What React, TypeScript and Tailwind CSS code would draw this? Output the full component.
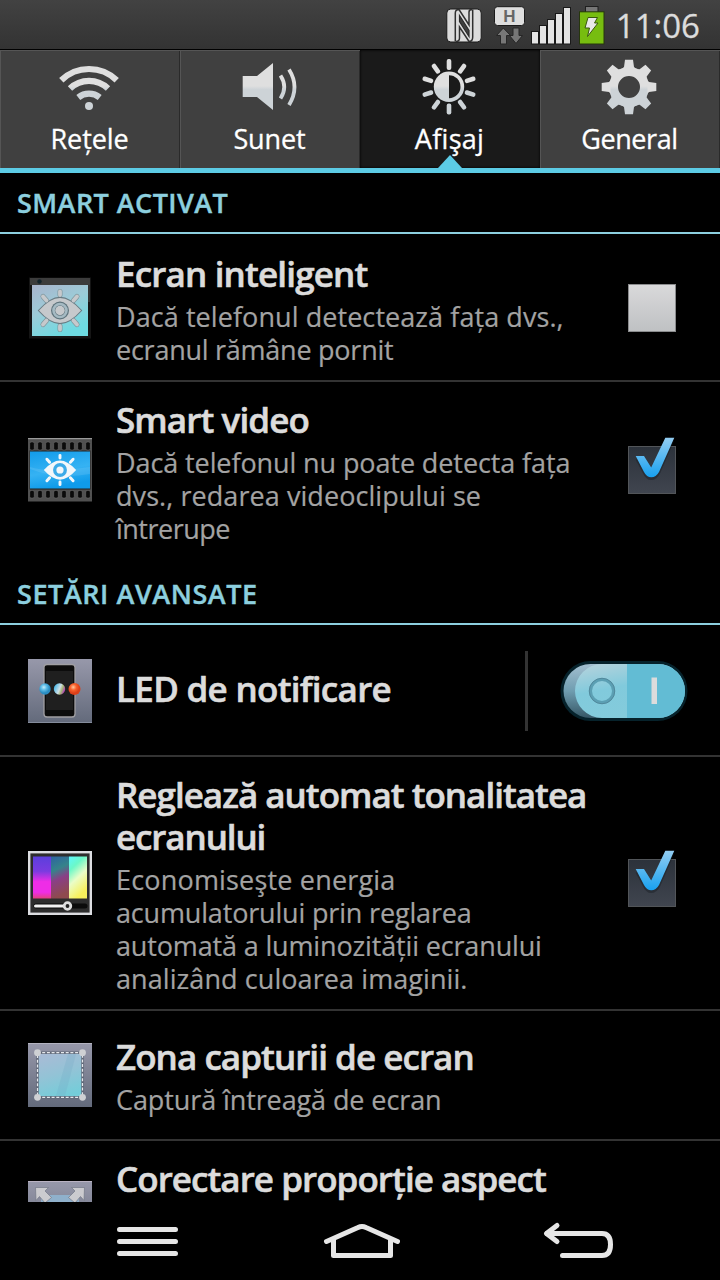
import type { ReactNode } from "react";
import { clsx } from "clsx";

type Line = { text: string; className?: string };

const tabs = [
  { label: "Rețele", icon: <WifiIcon />, track: "tracking-[-0.1px]" },
  { label: "Sunet", icon: <SoundIcon />, track: "tracking-[-0.1px]" },
  { label: "Afişaj", icon: <DisplayIcon />, track: "tracking-[0.3px]", active: true },
  { label: "General", icon: <GearIcon />, track: "tracking-[-0.4px]" },
];

const rays = [0, 36, 72, 108, 144, 180, 216, 252, 288, 324];
const teeth = [0, 45, 90, 135, 180, 225, 270, 315];
const holes = [0, 1, 2, 3, 4, 5, 6, 7];

function MetalFill({ id }: { id: string }) {
  return (
    <linearGradient id={id} x1="0" y1="0" x2="0" y2="72" gradientUnits="userSpaceOnUse">
      <stop offset="0.5" stopColor="#dfdfdf" />
      <stop offset="0.55" stopColor="#cdd3d7" />
    </linearGradient>
  );
}

function WifiIcon() {
  return (
    <svg className="h-[72px] w-[180px]" viewBox="0 0 180 72" fill="none" stroke="url(#wifi)" strokeWidth="6.2">
      <defs>
        <MetalFill id="wifi" />
      </defs>
      <path d="M61.3 30.3A39.6 39.6 0 0 1 116.7 30.3" />
      <path d="M70 38.5A27.3 27.3 0 0 1 108 38.5" />
      <path d="M78.3 47.5A17 17 0 0 1 99.7 47.5" />
      <circle cx="89" cy="56" r="4" fill="#cdd3d7" stroke="none" />
    </svg>
  );
}

function SoundIcon() {
  return (
    <svg className="h-[72px] w-[180px]" viewBox="180 0 180 72" fill="none">
      <defs>
        <MetalFill id="sound" />
      </defs>
      <path d="M242.7 26H257L273 13V60L257 47H242.7Z" fill="url(#sound)" />
      <path d="M280.5 25.5Q288 37 280.5 48.5M289 19.5Q300 37 289 55" stroke="url(#sound)" strokeWidth="3.8" />
    </svg>
  );
}

function DisplayIcon() {
  return (
    <svg className="h-[72px] w-[180px]" viewBox="360 0 180 72">
      <defs>
        <MetalFill id="display" />
      </defs>
      <circle cx="449" cy="36.7" r="15.2" fill="url(#display)" />
      <path d="M449 25.2A11.5 11.5 0 0 1 449 48.2Z" fill="#1a1a1a" />
      {rays.map((deg) => (
        <rect
          key={deg}
          x="446.7"
          y="9"
          width="4.6"
          height="11"
          rx="2"
          fill={deg > 90 && deg < 270 ? "#cdd3d7" : "#dfdfdf"}
          transform={`rotate(${deg} 449 36.7)`}
        />
      ))}
    </svg>
  );
}

function GearIcon() {
  return (
    <svg className="h-[72px] w-[180px]" viewBox="540 0 180 72">
      <defs>
        <MetalFill id="gear" />
      </defs>
      <circle cx="629" cy="37" r="15.5" fill="none" stroke="url(#gear)" strokeWidth="9" />
      {teeth.map((deg) => (
        <path
          key={deg}
          d="M-6.5 -18.5L-5 -20L-4 -27.3H4L5 -20L6.5 -18.5Z"
          fill={deg > 90 && deg < 270 ? "#cdd3d7" : "#dfdfdf"}
          transform={`translate(629 37) rotate(${deg})`}
        />
      ))}
    </svg>
  );
}

function StatusBar() {
  return (
    <header className="flex h-[50px] shrink-0 items-center justify-end border-b border-black bg-linear-to-b from-[#424242] to-[#333] pr-5">
      <svg className="h-[49px] w-[170px]" viewBox="440 0 170 49" fill="none">
        {/* NFC */}
        <rect x="446.8" y="9" width="34.4" height="33" rx="4" fill="#dcdcdc" stroke="#1b1b1b" />
        <path d="M455.3 41.500V13Q455.3 9.500 459 9.500L469 25V12Q469 9.500 472 9.500M472.700 9.500V37Q472.700 41.500 469 41.500L459.500 27V38Q459.500 41.500 456 41.500" stroke="#303030" strokeWidth="1.500" />
        <path d="M459.500 15.500L469 30.500V36.500L459.500 21.500Z" fill="#404040" stroke="#2b2b2b" strokeWidth="1.200" />
        {/* HSPA */}
        <rect x="494.5" y="6.7" width="30" height="18.8" rx="3" fill="#dedede" stroke="#1b1b1b" />
        <path d="M503.3 28L496.5 35.5H500.5V44H506.5V35.5H510.5Z" fill="#777" stroke="#262626" />
        <path d="M516 43.5L509.5 35.5H513V28H519V35.5H522.5Z" fill="#777" stroke="#262626" />
        {/* signal */}
        <g fill="#e4e4e4" stroke="#191919">
          <rect x="531.5" y="31.5" width="7" height="12.5" />
          <rect x="539.5" y="25.5" width="7" height="18.5" />
          <rect x="547.5" y="19.5" width="7" height="24.5" />
          <rect x="555.5" y="13.5" width="7" height="30.5" />
          <rect x="563.5" y="7.5" width="7" height="36.5" />
        </g>
        {/* battery */}
        <rect x="585.5" y="6.5" width="12.5" height="6" fill="#777" stroke="#1f1f1f" />
        <rect x="579.5" y="11.8" width="24.5" height="32.2" fill="#77bd10" stroke="#26360c" />
        <path d="M588 17.5H597.5L594.5 23H598L587.5 36.5L589.5 28H585Z" fill="#e8e8e8" stroke="#39590c" />
        <text x="509.5" y="22.3" textAnchor="middle" className="font-['Liberation_Sans',sans-serif] text-[17px] font-bold" fill="#666">
          H
        </text>
      </svg>
      <span className="ml-[3px] w-[87px] pt-0.5 text-right text-[33px] leading-[48px] whitespace-nowrap text-[#dcdcdc] [-webkit-text-stroke:0.3px]">
        11:06
      </span>
    </header>
  );
}

function TabBar() {
  return (
    <nav className="grid h-[123px] shrink-0 grid-cols-4 border-b-[5px] border-[#5ccbe5]">
      {tabs.map((tab) => (
        <div
          key={tab.label}
          className={clsx(
            "relative flex flex-col items-center",
            tab.active
              ? "bg-[#1a1a1a] shadow-[inset_0_0_3px_#000]"
              : "bg-[#404040] shadow-[inset_1px_1px_0_#555,inset_-1px_0_0_#2a2a2a]"
          )}
        >
          {tab.icon}
          <span className={clsx("pr-[1px] text-[27px] leading-[33px] text-white [-webkit-text-stroke:0.3px]", tab.track)}>
            {tab.label}
          </span>
          {tab.active && (
            <svg className="absolute bottom-0 left-[78px] h-[13px] w-6" viewBox="0 0 24 13">
              <path d="M0 13L12 0L24 13Z" fill="#5ccbe5" />
            </svg>
          )}
        </div>
      ))}
    </nav>
  );
}

function Eye({ fill, iris }: { fill: string; iris: string }) {
  return (
    <g>
      <path d="M-21 0Q-10 -12.5 0 -12.5T21 0Q10 12.5 0 12.5T-21 0Z" fill={fill} />
      <circle r="9" fill={iris} />
      <circle r="4.7" fill={fill} />
      <path
        d="M0 -19V-15.5M0 19V15.5M-17 -14L-13.5 -10M17 -14L13.5 -10M-17 14L-13.5 10M17 14L13.5 10"
        stroke={fill}
        strokeWidth="3.8"
        strokeLinecap="round"
      />
    </g>
  );
}

function SmartScreenIcon() {
  return (
    <svg className="size-16" viewBox="0 0 64 64">
      <defs>
        <linearGradient id="screen" x1="0" y1="0" x2="0.5" y2="1">
          <stop offset="0" stopColor="#a9b4cd" />
          <stop offset="0.5" stopColor="#9cccd8" />
          <stop offset="1" stopColor="#6edbe2" />
        </linearGradient>
      </defs>
      <rect x="1" y="1.5" width="62" height="61" fill="#151515" />
      <rect x="2" y="2" width="60" height="7" fill="#3c3c3c" />
      <rect x="60" y="9" width="2" height="17" fill="#333" />
      <circle cx="11.5" cy="5.5" r="2.2" fill="#13232b" />
      <rect x="4" y="9" width="56" height="51" fill="url(#screen)" />
      <g transform="translate(32 34.5)">
        <path
          d="M0 -19V-15.5M0 19V15.5M-17 -14L-13.5 -10M17 -14L13.5 -10M-17 14L-13.5 10M17 14L13.5 10"
          stroke="#7e959c"
          strokeWidth="5"
          strokeLinecap="round"
        />
        <path d="M-22.3 0Q-10 -13.7 0 -13.7T22.3 0Q10 13.7 0 13.7T-22.3 0Z" fill="#677a82" />
        <Eye fill="#c6c9cc" iris="#5f747d" />
        <circle r="6.5" fill="none" stroke="#a5bac3" strokeWidth="2.6" />
      </g>
    </svg>
  );
}

function SmartVideoIcon() {
  return (
    <svg className="size-16" viewBox="0 0 64 64">
      <defs>
        <linearGradient id="video" x1="0" y1="0" x2="0.3" y2="1">
          <stop offset="0" stopColor="#129bea" />
          <stop offset="0.6" stopColor="#35b2f3" />
          <stop offset="1" stopColor="#0f9bea" />
        </linearGradient>
      </defs>
      <rect width="64" height="63.5" fill="#505050" />
      <rect width="64" height="1.2" fill="#999" />
      <rect x="1.5" y="12.5" width="61" height="39" fill="#222" />
      {holes.map((i) => (
        <g key={i} fill="#0a0a0a" stroke="#6b6b6b" strokeWidth="0.6">
          <rect x={1.7 + i * 8} y="4" width="4.6" height="8" rx="1.5" />
          <rect x={1.7 + i * 8} y="52.5" width="4.6" height="7.5" rx="1.5" />
        </g>
      ))}
      <rect x="2" y="13.5" width="60" height="37" fill="url(#video)" />
      <path d="M2 29Q20 35 62 29V36Q30 42 2 31Z" fill="#7fcdf7" opacity="0.25" />
      <g transform="translate(32 32) scale(0.77)">
        <Eye fill="#f3f7fa" iris="#3dabe8" />
      </g>
    </svg>
  );
}

function LedIcon() {
  return (
    <svg className="mt-0.5 size-16" viewBox="0 0 64 64">
      <defs>
        <linearGradient id="panel" x1="0" y1="0" x2="0" y2="1">
          <stop offset="0" stopColor="#9798aa" />
          <stop offset="1" stopColor="#636a7b" />
        </linearGradient>
        <radialGradient id="blue" cx="0.4" cy="0.35">
          <stop offset="0" stopColor="#c4eefb" />
          <stop offset="0.5" stopColor="#5cbbe6" />
          <stop offset="1" stopColor="#2a8dc2" />
        </radialGradient>
        <linearGradient id="mixed" x1="0" y1="0.3" x2="1" y2="0.7">
          <stop offset="0" stopColor="#3fb4e8" />
          <stop offset="0.5" stopColor="#cfe0e6" />
          <stop offset="0.7" stopColor="#a8b878" />
          <stop offset="1" stopColor="#b321c8" />
        </linearGradient>
        <radialGradient id="red" cx="0.4" cy="0.35">
          <stop offset="0" stopColor="#ffc9a0" />
          <stop offset="0.5" stopColor="#f8622c" />
          <stop offset="1" stopColor="#dc3f18" />
        </radialGradient>
      </defs>
      <rect width="64" height="64" fill="url(#panel)" />
      <rect y="63" width="64" height="1" fill="#858c9c" />
      <rect x="16" y="5.5" width="31" height="52.5" rx="3" fill="#0c0c0c" stroke="#a09fa3" strokeWidth="1.3" />
      <rect x="18" y="12" width="27" height="39" fill="#1f1f1f" />
      <circle cx="17" cy="30" r="5.7" fill="url(#blue)" />
      <circle cx="31.5" cy="30" r="5.7" fill="url(#mixed)" />
      <circle cx="46.5" cy="30" r="6" fill="url(#red)" />
    </svg>
  );
}

function ToneIcon() {
  return (
    <svg className="size-16" viewBox="0 0 64 64">
      <defs>
        <linearGradient id="toneA" x1="0" y1="0" x2="0" y2="1">
          <stop offset="0" stopColor="#5b3fdc" />
          <stop offset="0.35" stopColor="#7a3be0" />
          <stop offset="0.6" stopColor="#ee2de6" />
          <stop offset="0.85" stopColor="#ee2de6" />
          <stop offset="1" stopColor="#e2407f" />
        </linearGradient>
        <linearGradient id="toneB" x1="0" y1="0" x2="0.2" y2="1">
          <stop offset="0" stopColor="#2d62a0" />
          <stop offset="0.35" stopColor="#35838a" />
          <stop offset="0.6" stopColor="#8a3f86" />
          <stop offset="1" stopColor="#8f4a4e" />
        </linearGradient>
        <linearGradient id="toneC" x1="0" y1="0" x2="0.4" y2="1">
          <stop offset="0" stopColor="#5cf7fb" />
          <stop offset="0.3" stopColor="#6cf8c8" />
          <stop offset="0.6" stopColor="#eafdc8" />
          <stop offset="1" stopColor="#f7f05c" />
        </linearGradient>
      </defs>
      <rect x="1.2" y="1.2" width="61.6" height="61.6" fill="#2d2d2d" stroke="#dcdde1" strokeWidth="2.4" />
      <rect x="5" y="5.5" width="18" height="42" fill="url(#toneA)" />
      <rect x="23" y="5.5" width="18" height="42" fill="url(#toneB)" />
      <rect x="41" y="5.5" width="18" height="42" fill="url(#toneC)" />
      <rect x="5.5" y="52.5" width="54" height="5" rx="2.5" fill="#0b0b0b" />
      <rect x="6" y="53.5" width="33" height="3" rx="1.5" fill="#f1f1f1" />
      <circle cx="39.5" cy="55" r="3.3" fill="#222" stroke="#dedede" strokeWidth="2.8" />
    </svg>
  );
}

function CaptureIcon() {
  return (
    <svg className="size-16" viewBox="0 0 64 64">
      <defs>
        <linearGradient id="capture" x1="0.2" y1="0" x2="0.5" y2="1">
          <stop offset="0" stopColor="#a9bbd6" />
          <stop offset="0.5" stopColor="#93c3d6" />
          <stop offset="1" stopColor="#74cdd9" />
        </linearGradient>
      </defs>
      <rect width="64" height="64" fill="url(#panel)" />
      <rect width="64" height="1" fill="#b3b3c0" />
      <rect x="9.5" y="9.7" width="45" height="44.6" fill="url(#capture)" stroke="#5f6676" strokeWidth="2.4" />
      <path d="M40 11H48L37 53H28Z" fill="#6fa9c4" opacity="0.25" />
      <rect x="9.5" y="9.7" width="45" height="44.6" fill="none" stroke="#e6e8ec" strokeWidth="1.2" strokeDasharray="3 1.7" />
      <g fill="#cfd1d4">
        <circle cx="9.5" cy="9.7" r="3.4" />
        <circle cx="54.5" cy="9.7" r="3.4" />
        <circle cx="9.5" cy="54.3" r="3.4" />
        <circle cx="54.5" cy="54.3" r="3.4" />
      </g>
    </svg>
  );
}

function AspectIcon() {
  return (
    <svg className="size-16" viewBox="0 0 64 64">
      <rect width="64" height="64" fill="url(#panel)" />
      <rect width="64" height="1" fill="#b9b2c2" />
      <rect x="13" y="14" width="38" height="36" fill="#8fb0cb" />
      <g fill="#cbcbcf" stroke="#737887" strokeWidth="0.7">
        <path d="M7.5 6.5H20.5L17 10L23.5 16.5L17 22L11.5 15.5L8 19.5Z" />
        <path d="M56.5 6.5H43.5L47 10L40.5 16.5L47 22L52.5 15.5L56 19.5Z" />
      </g>
    </svg>
  );
}

function Checkbox({ checked }: { checked?: boolean }) {
  if (!checked) {
    return <div className="mr-11 size-12 border border-[#8a8b8d] bg-linear-to-b from-[#d9d9da] to-[#bfc1c3]" />;
  }

  return (
    <div className="relative mr-11 size-12 border border-[#525559] bg-linear-to-b from-[#2c323b] to-[#40454f]">
      <svg className="absolute -top-[11px] -left-px h-[50px] w-12" viewBox="0 -10 48 50">
        <defs>
          <linearGradient id="check" x1="0" y1="0" x2="0" y2="1">
            <stop offset="0" stopColor="#93cdf2" />
            <stop offset="1" stopColor="#18a1f0" />
          </linearGradient>
        </defs>
        <path
          d="M9 13L16 26Q19 32.5 23 32.5Q28 32.5 31 26L44.5 -5"
          fill="none"
          stroke="#14181e"
          strokeWidth="3"
          opacity="0.4"
        />
        <path d="M7.7 10H16L23.2 21.5L37.3 -8.3H46.3L31 26Q28 31.3 23.3 31.3Q18.7 31.3 16 26Z" fill="url(#check)" />
      </svg>
    </div>
  );
}

function Toggle() {
  return (
    <svg className="mb-px h-[62px] w-[130px]" viewBox="0 0 130 62">
      <defs>
        <linearGradient id="toggleEdge" x1="0" y1="0" x2="0" y2="1">
          <stop offset="0" stopColor="#a3bfd0" />
          <stop offset="0.5" stopColor="#6f9db0" />
          <stop offset="1" stopColor="#355665" />
        </linearGradient>
        <linearGradient id="toggleKnob" x1="0" y1="0" x2="0.4" y2="1">
          <stop offset="0" stopColor="#b9d3dc" />
          <stop offset="0.5" stopColor="#81cadc" />
          <stop offset="1" stopColor="#84cbdb" />
        </linearGradient>
      </defs>
      <rect x="0.5" y="1" width="127" height="60" rx="30" fill="#06222b" />
      <rect x="3.5" y="4" width="90" height="54" rx="27" fill="url(#toggleEdge)" />
      <path d="M42 4H98A27 27 0 0 1 98 58H42A27 27 0 0 1 42 4Z" fill="url(#toggleKnob)" />
      <path d="M67 4H98A27 27 0 0 1 98 58H67Z" fill="#62bcd4" />
      <circle cx="42" cy="31" r="11.5" fill="none" stroke="#5b9fb3" strokeWidth="3" />
      <circle cx="42" cy="31" r="12.8" fill="none" stroke="#4e8194" strokeWidth="0.8" />
      <rect x="91.5" y="17.5" width="5.5" height="26.5" fill="#dcdcdc" />
    </svg>
  );
}

function Section({ title, className }: { title: string; className: string }) {
  return (
    <h2
      className={clsx(
        "flex shrink-0 items-end border-b-2 border-[#8ccfdf] pb-[13px] pl-[17px] text-[27px] leading-[33px] font-semibold text-[#8ccfdf] [-webkit-text-stroke:0.4px]",
        className
      )}
    >
      {title}
    </h2>
  );
}

type RowProps = {
  icon: ReactNode;
  title: Line[];
  lines?: Line[];
  control?: ReactNode;
  className: string;
  textClassName?: string;
};

function Row({ icon, title, lines = [], control, className, textClassName }: RowProps) {
  return (
    <div className={clsx("flex shrink-0 items-center border-[#333] pl-7", className)}>
      {icon}
      <div className={clsx("ml-6 flex-1 whitespace-nowrap", textClassName)}>
        <h3 className="text-[35px] leading-[42px] font-semibold text-[#dcdcdc] [-webkit-text-stroke:0.6px]">
          {title.map((line) => (
            <span key={line.text} className={clsx("block", line.className)}>
              {line.text}
            </span>
          ))}
        </h3>
        {lines.length > 0 && (
          <p className="mt-[5px] text-[27px] leading-[33px] text-[#a3a3a3] [-webkit-text-stroke:0.2px]">
            {lines.map((line) => (
              <span key={line.text} className={clsx("block", line.className)}>
                {line.text}
              </span>
            ))}
          </p>
        )}
      </div>
      {control}
    </div>
  );
}

function NavBar() {
  return (
    <footer className="flex h-[78px] shrink-0 items-center bg-black pl-[116px]">
      <svg className="h-10 w-16" viewBox="116 1221 64 40" stroke="#e6e6e6" strokeWidth="5" strokeLinecap="round">
        <path d="M119.5 1229.5H175.5M119.5 1241.5H175.5M119.5 1253.5H175.5" />
      </svg>
      <svg className="ml-[142px] h-10 w-20" viewBox="322 1221 80 40" fill="none" stroke="#e6e6e6" strokeWidth="5" strokeLinecap="round" strokeLinejoin="round">
        <path d="M326.5 1241.5L358 1227.5Q362 1225.5 366 1227.5L397.5 1241.5" />
        <path d="M333.5 1240V1255.5H390.5V1240" />
      </svg>
      <svg className="ml-[140px] h-10 w-[74px]" viewBox="542 1221 74 40" fill="none" stroke="#e6e6e6" strokeWidth="5" strokeLinecap="round" strokeLinejoin="round">
        <path d="M557 1225.5L546.5 1233.5L557 1241.5" />
        <path d="M547 1233.5H602Q610.5 1233.5 610.5 1244.5T602 1255.5H562.5" />
      </svg>
    </footer>
  );
}

export default function App() {
  return (
    <div className="flex h-[1280px] w-[720px] flex-col overflow-hidden bg-black font-['Open_Sans','Noto_Sans',sans-serif]">
      <StatusBar />
      <TabBar />

      <main className="flex h-[1029px] shrink-0 flex-col overflow-hidden">
        <Section title="SMART ACTIVAT" className="h-[61px] tracking-[0.45px]" />
        <Row
          className="h-[148px] border-b-2 pt-0.5"
          textClassName="pt-0.5"
          icon={<SmartScreenIcon />}
          title={[{ text: "Ecran inteligent", className: "tracking-[-0.83px]" }]}
          lines={[
            { text: "Dacă telefonul detectează fața dvs.,", className: "tracking-[0.07px]" },
            { text: "ecranul rămâne pornit", className: "tracking-[-0.25px]" },
          ]}
          control={<Checkbox />}
        />
        <Row
          className="h-[176px]"
          textClassName="pt-1"
          icon={<SmartVideoIcon />}
          title={[{ text: "Smart video", className: "tracking-[-0.9px]" }]}
          lines={[
            { text: "Dacă telefonul nu poate detecta fața", className: "tracking-[-0.1px]" },
            { text: "dvs., redarea videoclipului se", className: "tracking-[0.07px]" },
            { text: "întrerupe", className: "tracking-[-0.5px]" },
          ]}
          control={<Checkbox checked />}
        />

        <Section title="SETĂRI AVANSATE" className="h-[67px] tracking-[0.57px]" />
        <Row
          className="h-[132px] border-b-2"
          textClassName="pb-0.5"
          icon={<LedIcon />}
          title={[{ text: "LED de notificare", className: "tracking-[-0.7px]" }]}
          control={
            <div className="mt-0.5 mr-[30px] flex h-20 items-center border-l-[3px] border-[#333] pl-8">
              <Toggle />
            </div>
          }
        />
        <Row
          className="h-[254px] border-b-2"
          textClassName="pt-0.5"
          icon={<ToneIcon />}
          title={[
            { text: "Reglează automat tonalitatea", className: "tracking-[-1px]" },
            { text: "ecranului", className: "tracking-[-1.1px]" },
          ]}
          lines={[
            { text: "Economiseşte energia", className: "tracking-[0.18px]" },
            { text: "acumulatorului prin reglarea", className: "tracking-[-0.17px]" },
            { text: "automată a luminozității ecranului", className: "tracking-[-0.15px]" },
            { text: "analizând culoarea imaginii.", className: "tracking-[0.08px]" },
          ]}
          control={<Checkbox checked />}
        />
        <Row
          className="h-[130px] border-b-2"
          textClassName="pt-0.5"
          icon={<CaptureIcon />}
          title={[{ text: "Zona capturii de ecran", className: "tracking-[-0.95px]" }]}
          lines={[{ text: "Captură întreagă de ecran", className: "tracking-[-0.1px]" }]}
        />
        <Row
          className="h-[144px]"
          textClassName="h-[111px]"
          icon={<AspectIcon />}
          title={[{ text: "Corectare proporție aspect", className: "tracking-[-0.95px]" }]}
        />
      </main>

      <NavBar />
    </div>
  );
}
